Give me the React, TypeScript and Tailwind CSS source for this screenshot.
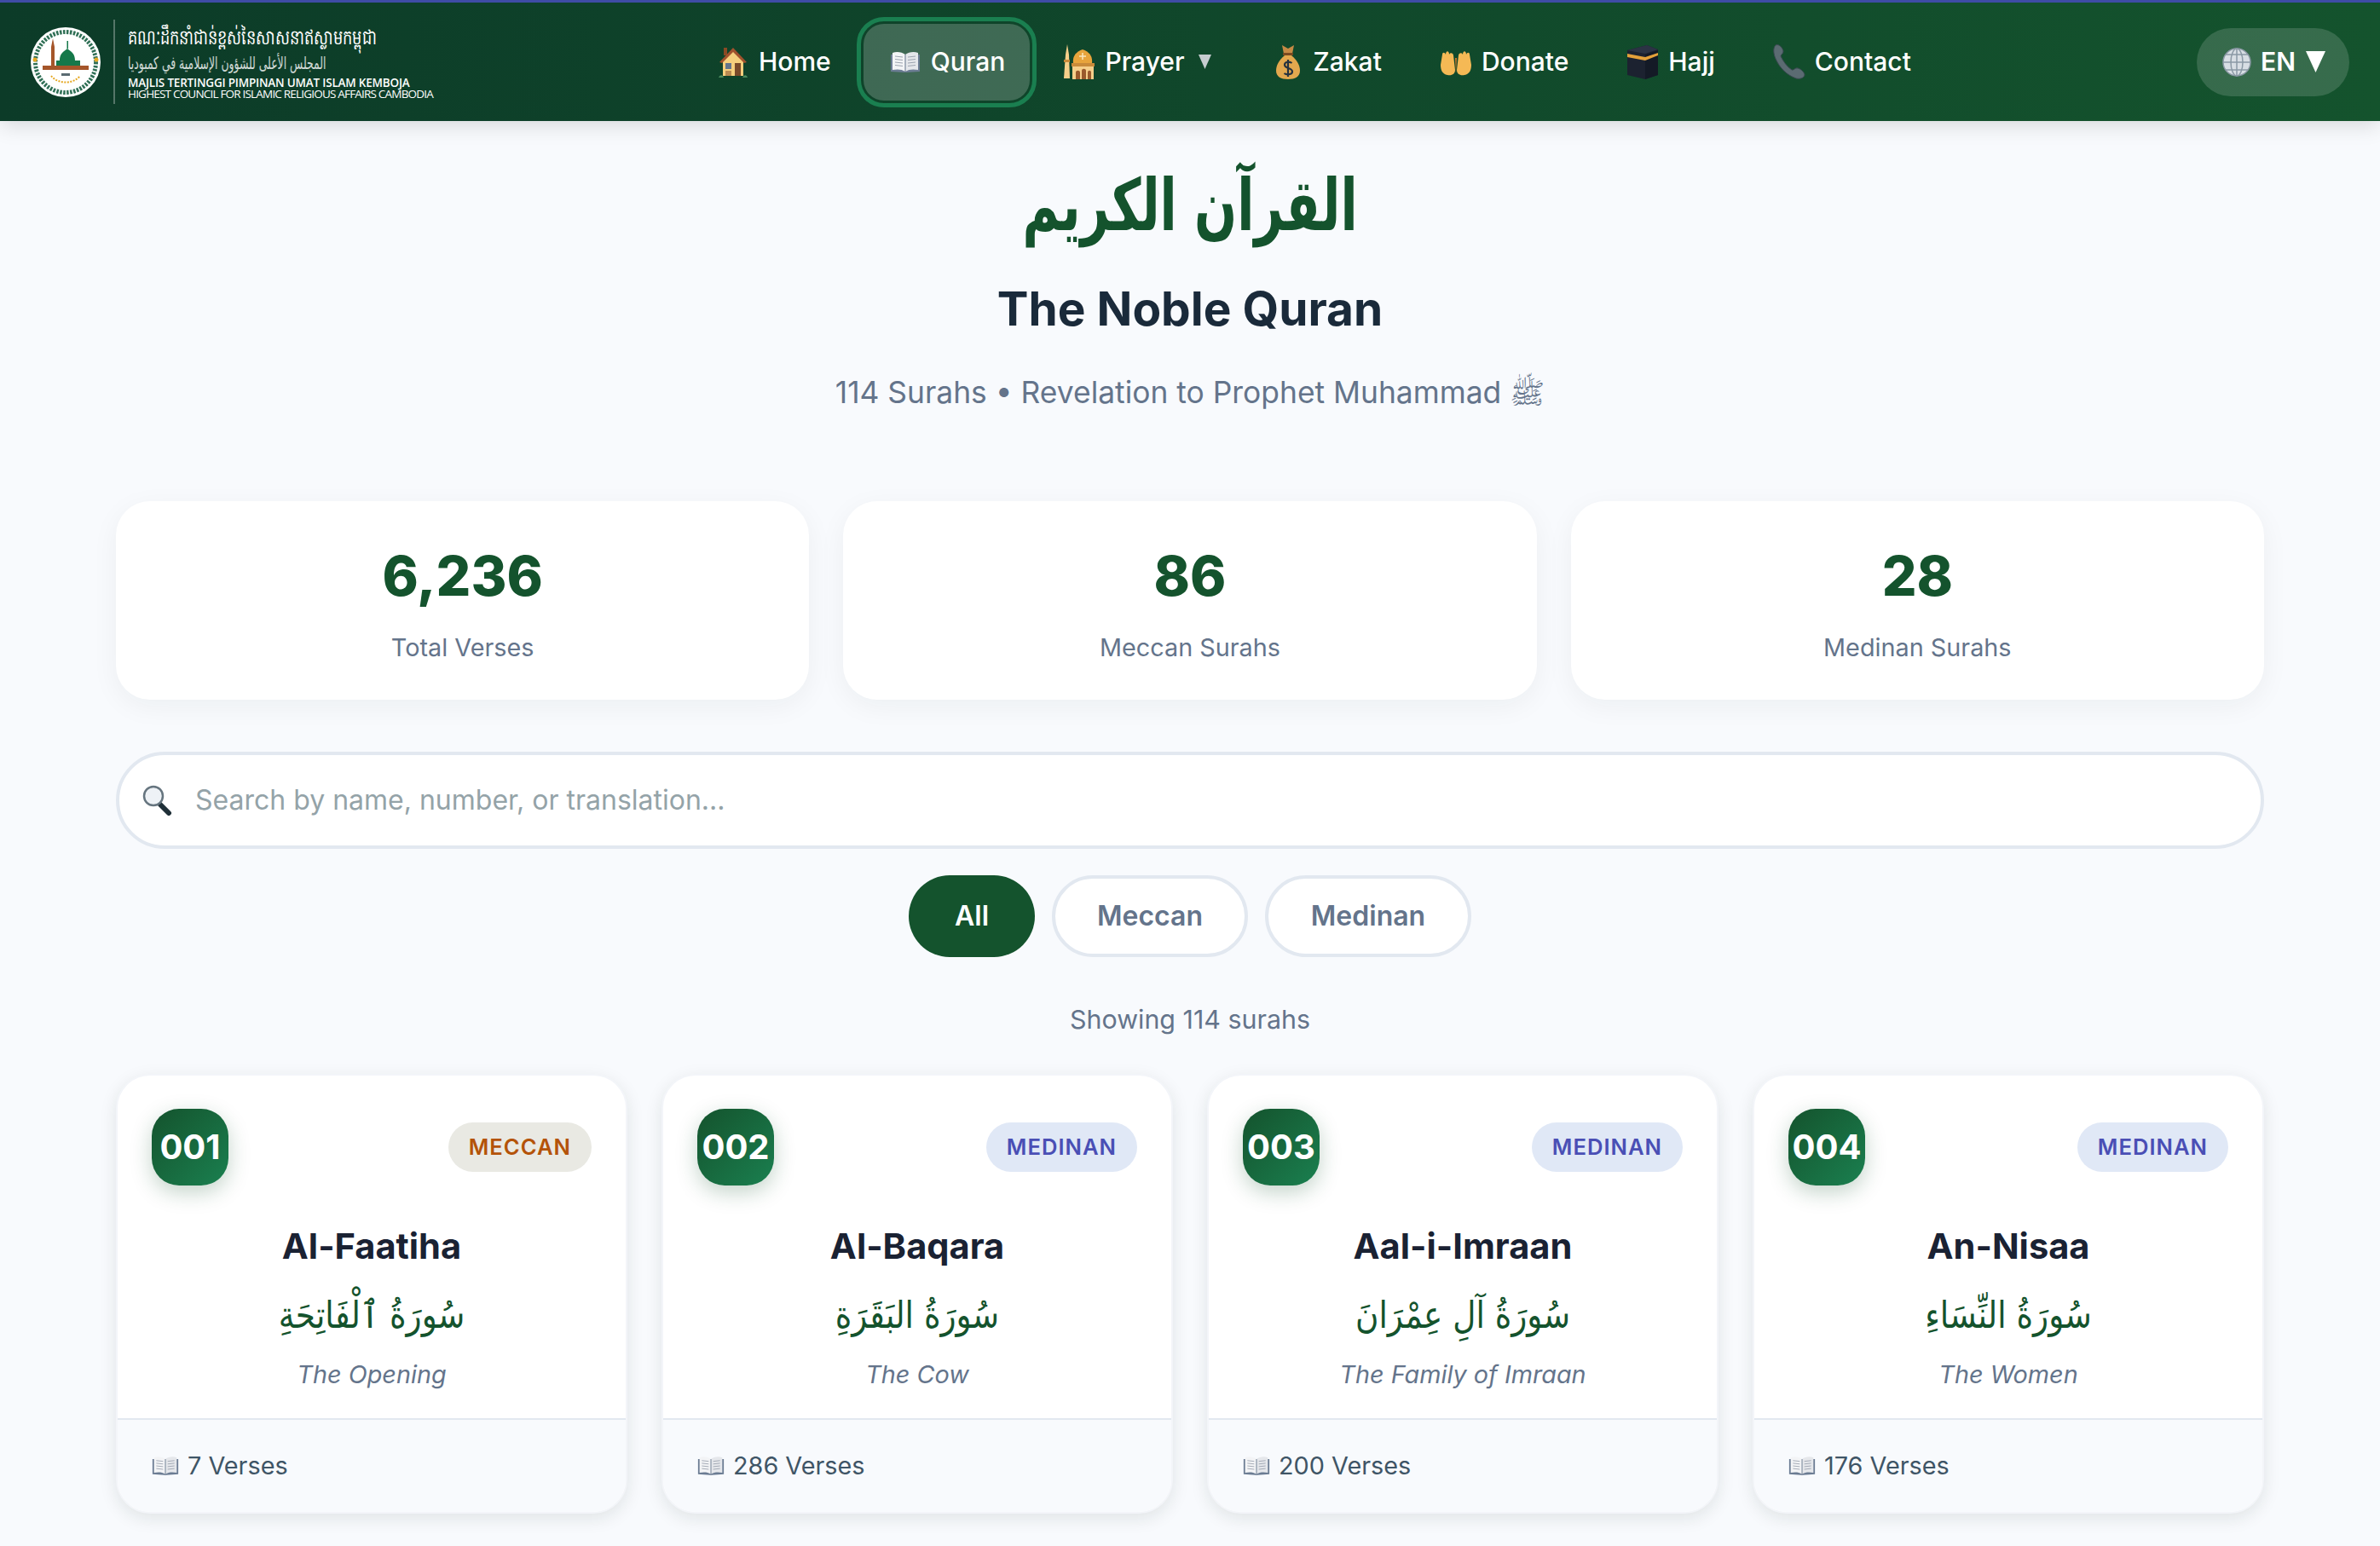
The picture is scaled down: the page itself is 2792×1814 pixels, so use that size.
import React from 'react';

const inter = "font-['Inter',sans-serif]";
const arabic = "font-['DejaVu_Sans','Noto_Sans',sans-serif]";

const surahs = [
  { no: '001', type: 'MECCAN', name: 'Al-Faatiha', ar: 'سُورَةُ ٱلْفَاتِحَةِ', en: 'The Opening', verses: '7 Verses' },
  { no: '002', type: 'MEDINAN', name: 'Al-Baqara', ar: 'سُورَةُ البَقَرَةِ', en: 'The Cow', verses: '286 Verses' },
  { no: '003', type: 'MEDINAN', name: 'Aal-i-Imraan', ar: 'سُورَةُ آلِ عِمْرَانَ', en: 'The Family of Imraan', verses: '200 Verses' },
  { no: '004', type: 'MEDINAN', name: 'An-Nisaa', ar: 'سُورَةُ النِّسَاءِ', en: 'The Women', verses: '176 Verses' },
];

const stats = [
  { value: '6,236', label: 'Total Verses' },
  { value: '86', label: 'Meccan Surahs' },
  { value: '28', label: 'Medinan Surahs' },
];

function BookIcon({ className }: { className?: string }) {
  return (
    <svg viewBox="0 0 36 28" className={className}>
      <path d="M1 5 L1 25 L17 26 L19 26 L35 25 L35 5 Z" fill="#6b7c93" />
      <path d="M3 3 C8 1 14 2 18 5 L18 25 C14 22 8 22 3 23 Z" fill="#f3f4f6" />
      <path d="M33 3 C28 1 22 2 18 5 L18 25 C22 22 28 22 33 23 Z" fill="#e5e7eb" />
      <path d="M6 7 L15 8 M6 10.500 L15 11.500 M6 14 L15 15 M6 17.500 L15 18.500 M21 8 L30 7 M21 11.500 L30 10.500 M21 15 L30 14 M21 18.500 L30 17.500" stroke="#9ca3af" strokeWidth="1" />
      <path d="M18 5 L18 26" stroke="#64748b" strokeWidth="1" />
    </svg>
  );
}

function HouseIcon() {
  return (
    <svg viewBox="0 0 36 40" className="w-[36px] h-[40px]">
      <rect x="7" y="3" width="4" height="9" fill="#8a4a24" />
      <path d="M6 18 L18 5 L30 18 L30 36 L6 36 Z" fill="#f6cf7d" />
      <path d="M2 20 L18 3 L34 20 L31 21 L18 8 L5 21 Z" fill="#a0522d" />
      <rect x="9" y="21" width="7" height="7" fill="#64748b" />
      <rect x="20" y="21" width="7" height="15" fill="#7a4a2a" />
      <rect x="9" y="30" width="7" height="6" fill="#b98a52" />
      <path d="M1 38 C3 34 6 35 7 38 Z M29 38 C31 34 34 35 35 38 Z" fill="#4b8a5e" />
    </svg>
  );
}

function MosqueIcon() {
  return (
    <svg viewBox="0 0 38 42" className="w-[38px] h-[42px]">
      <path d="M5 0 L7 12 L8 40 L1 40 L3 12 Z" fill="#f6cf8a" />
      <rect x="1" y="18" width="7" height="3" fill="#c98a3a" />
      <path d="M23 6 C31 9 35 14 34 22 L12 22 C11 14 15 9 23 6 Z" fill="#e8a43c" />
      <rect x="10" y="22" width="27" height="4" fill="#c98a3a" />
      <rect x="11" y="26" width="25" height="15" fill="#f6cf8a" />
      <path d="M15 41 L15 33 C15 30 20 30 20 33 L20 41 Z M22 41 L22 31 C22 28 27 28 27 31 L27 41 Z M29 41 L29 33 C29 30 33 30 33 33 L33 41 Z" fill="#9a5a2c" />
      <path d="M23 10 L23 18 M19 14 L27 14" stroke="#fbe6bd" strokeWidth="1.500" />
    </svg>
  );
}

function BagIcon() {
  return (
    <svg viewBox="0 0 30 42" className="w-[30px] h-[42px]">
      <path d="M8 1 L15 5 L22 1 L20 11 L10 11 Z" fill="#c68a45" />
      <rect x="9" y="10" width="12" height="3" rx="1" fill="#7a4a20" />
      <path d="M11 13 L19 13 C26 19 29 25 29 31 C29 38 23 41 15 41 C7 41 1 38 1 31 C1 25 4 19 11 13 Z" fill="#e3a84e" />
      <path d="M19.500 22 C17 20 11 20 11 24 C11 29 20 27 20 32 C20 36 13 36 10.500 34 M15 18 L15 38" stroke="#26323f" strokeWidth="2.200" fill="none" />
    </svg>
  );
}

function PalmsIcon() {
  return (
    <svg viewBox="0 0 38 34" className="w-[38px] h-[34px]">
      <path d="M3 8 C3 5 6 5 7 8 C7 3 11 3 11 8 C12 5 16 6 16 9 L18 26 C18 31 14 33 9 32 C3 31 1 26 1 20 Z" fill="#f5b955" />
      <path d="M35 8 C35 5 32 5 31 8 C31 3 27 3 27 8 C26 5 22 6 22 9 L20 26 C20 31 24 33 29 32 C35 31 37 26 37 20 Z" fill="#f5b955" />
      <path d="M18 12 L19 30 L20 12" fill="#c9792c" />
    </svg>
  );
}

function KaabaIcon() {
  return (
    <svg viewBox="0 0 38 42" className="w-[38px] h-[42px]">
      <path d="M1 7 L24 1 L37 6 L37 36 L22 41 L1 36 Z" fill="#1c2230" />
      <path d="M22 12 L37 7 L37 36 L22 41 Z" fill="#141a26" />
      <path d="M1 11 L22 15 L37 10 L37 13 L22 19 L1 15 Z" fill="#e4a13a" />
      <path d="M1 7 L24 1 L37 6 L22 11 Z" fill="#2b3344" />
    </svg>
  );
}

function PhoneIcon() {
  return (
    <svg viewBox="0 0 38 42" className="w-[38px] h-[42px]">
      <path d="M3 1 C0 4 0 10 3 17 C8 28 16 36 27 40 C31 41 36 40 37 36 C37 33 33 29 29 28 C26 27 24 31 22 30 C16 26 12 20 9 14 C9 12 12 11 12 8 C11 4 7 -1 3 1 Z" fill="#5b6b72" stroke="#3b4a52" strokeWidth="1" />
    </svg>
  );
}

function GlobeIcon() {
  return (
    <svg viewBox="0 0 34 34" className="w-[34px] h-[34px]">
      <circle cx="17" cy="17" r="16" fill="#d8dee4" />
      <g stroke="#8b99a5" strokeWidth="1.500" fill="none">
        <circle cx="17" cy="17" r="16" />
        <ellipse cx="17" cy="17" rx="7" ry="16" />
        <path d="M17 1 L17 33 M1 17 L33 17 M4 8 L30 8 M4 26 L30 26" />
      </g>
    </svg>
  );
}

function SearchIcon() {
  return (
    <svg viewBox="0 0 36 36" className="w-[36px] h-[36px]">
      <path d="M22 23 L32 33" stroke="#1f2f38" strokeWidth="6" strokeLinecap="round" />
      <circle cx="14" cy="13" r="11" fill="#eef2f6" stroke="#66757f" strokeWidth="2.500" />
    </svg>
  );
}

function Emblem() {
  return (
    <svg viewBox="0 0 82 84" className="w-[82px] h-[84px] shrink-0">
      <ellipse cx="41" cy="42" rx="41" ry="41" fill="#ffffff" />
      <circle cx="41" cy="42" r="35.500" fill="none" stroke="#2f6f55" strokeWidth="5" strokeDasharray="2.500 1.500" />
      <circle cx="41" cy="42" r="31" fill="#ffffff" />
      <path d="M24 46 L24 24 L26 14 L28 24 L28 46 Z" fill="#a5562a" />
      <path d="M30 46 L30 40 L34 40 C34 32 38 30 43 26 C48 30 52 32 52 40 L58 40 L58 46 Z" fill="#15784a" />
      <rect x="42.500" y="17" width="1.500" height="9" fill="#15784a" />
      <rect x="14" y="46" width="54" height="5" fill="#a5562a" />
      <path d="M24 58 C32 68 50 68 58 58" stroke="#e5a823" strokeWidth="2" fill="none" strokeDasharray="2 1.500" />
      <rect x="36" y="55" width="10" height="3" fill="#5b6b72" />
      <circle cx="5" cy="39" r="2.500" fill="#e5a823" />
      <circle cx="77" cy="39" r="2.500" fill="#e5a823" />
    </svg>
  );
}

function Logo() {
  return (
    <div className="w-[811px] pl-[36px] flex items-center gap-[15px] shrink-0">
      <Emblem />
      <div className="w-[2px] h-[99px] bg-white/30" />
      <div className="flex flex-col text-white">
        <div className="h-[30px] w-[300px] text-[24px] leading-[30px] whitespace-nowrap origin-left scale-x-[0.74] font-['Noto_Sans','DejaVu_Sans',sans-serif]">គណៈដឹកនាំជាន់ខ្ពស់នៃសាសនាឥស្លាមកម្ពុជា</div>
        <div className="h-[33px] w-[240px] flex">
          <span dir="rtl" className={`text-[20px] leading-[33px] whitespace-nowrap text-white/80 origin-left scale-x-[0.62] ${arabic}`}>المجلس الأعلى للشؤون الإسلامية في كمبوديا</span>
        </div>
        <div className="text-[13.500px] leading-[13px] font-semibold whitespace-nowrap tracking-[-0.2px] font-['Open_Sans',sans-serif]">MAJLIS TERTINGGI PIMPINAN UMAT ISLAM KEMBOJA</div>
        <div className="text-[13.500px] leading-[13px] whitespace-nowrap tracking-[-0.8px] font-['Open_Sans',sans-serif]">HIGHEST COUNCIL FOR ISLAMIC RELIGIOUS AFFAIRS CAMBODIA</div>
      </div>
    </div>
  );
}

function NavItem({ icon, label, active, caret }: { icon: React.ReactNode; label: string; active?: boolean; caret?: boolean }) {
  return (
    <div className={`h-[90px] px-[29px] flex items-center gap-[10px] rounded-[24px] text-white text-[30px] font-medium whitespace-nowrap ${active ? 'bg-white/20 outline-[5px] outline-offset-[3px] outline-[#1a7f50]' : ''}`}>
      <span className="w-[40px] h-[44px] flex items-center justify-center shrink-0">{icon}</span>
      <span>{label}</span>
      {caret && (
        <svg viewBox="0 0 16 18" className="w-[15px] h-[17px] ml-[6px] mr-[3px]">
          <path d="M0 0 L16 0 L8 18 Z" fill="#c6cdd0" />
        </svg>
      )}
    </div>
  );
}

function Header() {
  return (
    <header className="relative z-10 h-[142px] border-t-[3px] border-[#3f4ca6] bg-gradient-to-r from-[#0c3b28] to-[#14532d] shadow-[0_4px_24px_rgba(0,0,0,0.15)] flex items-center">
      <Logo />
      <nav className="flex items-center gap-[9px]">
        <NavItem icon={<HouseIcon />} label="Home" />
        <NavItem icon={<BookIcon className="w-[36px] h-[30px]" />} label="Quran" active />
        <NavItem icon={<MosqueIcon />} label="Prayer" caret />
        <NavItem icon={<BagIcon />} label="Zakat" />
        <NavItem icon={<PalmsIcon />} label="Donate" />
        <NavItem icon={<KaabaIcon />} label="Hajj" />
        <NavItem icon={<PhoneIcon />} label="Contact" />
      </nav>
      <div className="ml-auto mr-[36px] w-[179px] h-[80px] rounded-full bg-white/15 flex items-center pl-[30px] gap-[11px] text-white text-[30px] font-semibold">
        <GlobeIcon />
        <span>EN</span>
        <svg viewBox="0 0 24 26" className="w-[23px] h-[25px] ml-[1px]">
          <path d="M0 0 L24 0 L12 26 Z" fill="#ffffff" />
        </svg>
      </div>
    </header>
  );
}

function Hero() {
  return (
    <section className="text-center">
      <h1 dir="rtl" className={`mt-[42px] h-[114px] text-[84px] leading-[114px] font-bold text-[#14532d] scale-x-[0.7] ${arabic}`}>القرآن الكريم</h1>
      <h2 className="mt-[30px] text-[55px] leading-[68px] font-bold text-[#1a2a3a]">The Noble Quran</h2>
      <p className="mt-[39px] text-[35.400px] leading-[52px] text-[#64748b]">
        114 Surahs • Revelation to Prophet Muhammad <span className={`text-[34px] ${arabic}`}>ﷺ</span>
      </p>
    </section>
  );
}

function Stats() {
  return (
    <section className="mt-[101px] grid grid-cols-3 gap-[40px]">
      {stats.map((s) => (
        <div key={s.label} className="h-[233px] rounded-[40px] bg-white shadow-[0_8px_32px_rgba(15,40,30,0.05)] flex flex-col items-center pt-[44px]">
          <div className="text-[64px] leading-[88px] font-extrabold text-[#14532d]">{s.value}</div>
          <div className="mt-[18px] text-[28.800px] leading-[44px] text-[#64748b]">{s.label}</div>
        </div>
      ))}
    </section>
  );
}

function Filters() {
  return (
    <section>
      <div className="mt-[61px] h-[114px] rounded-full border-[4px] border-[#e2e8f0] bg-white flex items-center pl-[26px] gap-[27px]">
        <SearchIcon />
        <span className="text-[32px] text-[#94a3a8]">Search by name, number, or translation...</span>
      </div>
      <div className="mt-[31px] flex justify-center gap-[20px] text-[32px] font-semibold">
        <div className="h-[96px] w-[148px] rounded-full bg-[#14532d] text-white flex items-center justify-center">All</div>
        <div className="h-[96px] w-[230px] rounded-full border-[4px] border-[#e2e8f0] bg-white text-[#64748b] flex items-center justify-center">Meccan</div>
        <div className="h-[96px] w-[242px] rounded-full border-[4px] border-[#e2e8f0] bg-white text-[#64748b] flex items-center justify-center">Medinan</div>
      </div>
      <p className="mt-[49px] text-center text-[30.400px] leading-[48px] text-[#64748b]">Showing 114 surahs</p>
    </section>
  );
}

function SurahCard({ s }: { s: (typeof surahs)[number] }) {
  return (
    <div className="h-[516px] rounded-[40px] border-[2px] border-[#f3f5f9] bg-white overflow-hidden shadow-[0_6px_20px_rgba(20,40,30,0.1)] flex flex-col">
      <div className="flex-1 px-[40px] pt-[39px]">
        <div className="flex items-center justify-between">
          <div className="w-[90px] h-[90px] rounded-[32px] bg-gradient-to-br from-[#14532d] to-[#1a8050] shadow-[0_8px_24px_rgba(20,83,45,0.25)] text-white text-[40px] font-bold flex items-center justify-center">{s.no}</div>
          <div className={`h-[58px] px-[24px] rounded-full flex items-center text-[25.600px] font-semibold tracking-[1px] ${s.type === 'MECCAN' ? 'bg-[#e9e9e3] text-[#b45309]' : 'bg-[#e0e8f6] text-[#4a4fb5]'}`}>{s.type}</div>
        </div>
        <div className="mt-[46px] text-center text-[41.600px] leading-[50px] font-bold text-[#1a2233]">{s.name}</div>
        <div dir="rtl" className={`mt-[23px] text-center text-[44px] leading-[66px] text-[#14532d] scale-x-[0.85] ${arabic}`}>{s.ar}</div>
        <div className="mt-[17px] text-center text-[28.800px] leading-[40px] italic text-[#64748b]">{s.en}</div>
      </div>
      <div className="h-[110px] shrink-0 border-t-[2px] border-[#e2e8f0] bg-[#f8fafd] px-[40px] flex items-center gap-[10px] text-[28.800px] text-[#3f5566]">
        <BookIcon className="w-[32px] h-[26px]" />
        <span>{s.verses}</span>
      </div>
    </div>
  );
}

export default function App() {
  return (
    <div className={`h-screen overflow-hidden bg-[#f8fafd] ${inter}`}>
      <Header />
      <main className="w-[2520px] mx-auto">
        <Hero />
        <Stats />
        <Filters />
        <section className="mt-[40px] grid grid-cols-4 gap-[40px]">
          {surahs.map((s) => (
            <SurahCard key={s.no} s={s} />
          ))}
        </section>
      </main>
    </div>
  );
}
